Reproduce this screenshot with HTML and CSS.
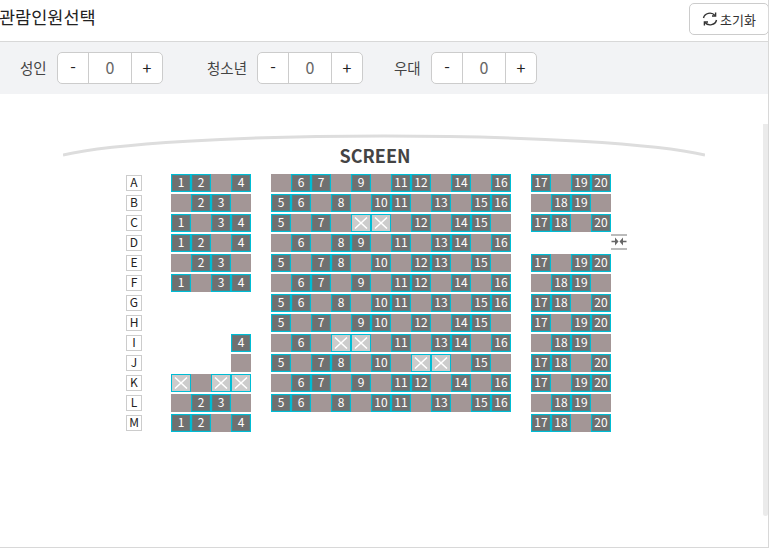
FILE: index.html
```html
<!DOCTYPE html>
<html lang="ko">
<head>
    <meta charset="UTF-8">
    <title>관람인원선택</title>
    <link rel="stylesheet" href="styles.css">
</head>
<body>
    <div class="panel">
        <div class="panel-head">
            <h2 class="panel-title">관람인원선택</h2>
            <button class="reset-btn">
                <svg class="reset-icon" viewBox="0 0 16 16" fill="none" stroke="#333" stroke-width="1.4">
                    <path d="M1.5 7 A6.5 6 0 0 1 13 4.5"/>
                    <path d="M13.6 1.4 V5 H10"/>
                    <path d="M14.5 9 A6.5 6 0 0 1 3 11.5"/>
                    <path d="M2.4 14.6 V11 H6"/>
                </svg>
                초기화
            </button>
        </div>

        <div class="count-bar">
            <span class="count-label">성인</span>
            <div class="stepper"><span class="step-btn">-</span><span class="step-num">0</span><span class="step-btn">+</span></div>
            <span class="count-label count-label-teen">청소년</span>
            <div class="stepper"><span class="step-btn">-</span><span class="step-num">0</span><span class="step-btn">+</span></div>
            <span class="count-label count-label-pref">우대</span>
            <div class="stepper"><span class="step-btn">-</span><span class="step-num">0</span><span class="step-btn">+</span></div>
        </div>

        <div class="seat-area">
            <div class="scroll-thumb"></div>
            <div class="screen">
                <svg class="screen-arc" viewBox="0 0 642 36" fill="none">
                    <path d="M0 31 A340 28.4 0 0 1 642 31" stroke="#dddddd" stroke-width="3"/>
                </svg>
                <div class="screen-text">SCREEN</div>
            </div>
            <div id="seatMap" class="seat-map"></div>
        </div>
    </div>

    <script src="seats.js"></script>
</body>
</html>
```

FILE: styles.css
```css
* {
    box-sizing: border-box;
}
body {
    margin: 0;
    font-family: "Noto Sans CJK KR", "Noto Sans", sans-serif;
    color: #333;
    background: #fff;
    overflow: hidden;
}
.panel {
    width: 769px;
    height: 548px;
    border-right: 1px solid #d8d8d8;
    border-bottom: 1px solid #d8d8d8;
    overflow: hidden;
}
.panel-head {
    height: 41px;
    padding-bottom: 7px;
    display: flex;
    align-items: center;
    justify-content: space-between;
}
.panel-title {
    margin: -2px 0 0 -1px;
    font-size: 17.5px;
    font-weight: 400;
    color: #222;
}
.reset-btn {
    width: 80px;
    height: 32px;
    margin-top: 4px;
    margin-right: -1px;
    padding: 0;
    display: flex;
    align-items: center;
    justify-content: center;
    gap: 2px;
    font-family: inherit;
    font-size: 13px;
    color: #333;
    background: #fff;
    border: 1px solid #ccc;
    border-radius: 5px;
}
.reset-icon {
    width: 16px;
    height: 16px;
}
.count-bar {
    height: 53px;
    padding-left: 20px;
    border-top: 1px solid #d8d8d8;
    background: #f2f3f5;
    display: flex;
    align-items: center;
}
.count-label {
    width: 27px;
    flex: none;
    margin-right: 10px;
    padding-bottom: 2px;
    font-size: 14.5px;
    white-space: nowrap;
    color: #444;
}
.count-label-teen {
    width: 40px;
    margin-left: 44px;
}
.count-label-pref {
    margin-left: 31px;
}
.stepper {
    width: 106px;
    height: 32px;
    flex: none;
    display: flex;
    background: #fff;
    border: 1px solid #ccc;
    border-radius: 5px;
    font-size: 16px;
    line-height: 28px;
    text-align: center;
}
.step-btn {
    width: 30px;
    color: #222;
}
.step-num {
    flex: 1;
    color: #666;
    border-left: 1px solid #ccc;
    border-right: 1px solid #ccc;
}
.seat-area {
    position: relative;
    height: 453px;
    padding-top: 30px;
}
.scroll-thumb {
    position: absolute;
    top: 30px;
    right: 0;
    width: 5px;
    height: 392px;
    background: #ebebeb;
    border-radius: 0 0 3px 3px;
}
.screen {
    width: 642px;
    height: 50px;
    margin-left: 63px;
}
.screen-arc {
    display: block;
    width: 642px;
    height: 36px;
}
.screen-text {
    margin-top: -17px;
    padding-right: 18px;
    text-align: center;
    font-size: 18px;
    line-height: 24px;
    font-weight: 700;
    color: #444;
}
.seat-map {
    margin-left: 126px;
}
.seat-row {
    position: relative;
    height: 18px;
    margin-bottom: 2px;
    display: flex;
}
.row-label {
    width: 16px;
    height: 16px;
    margin-top: 1px;
    margin-right: 29px;
    border: 1px solid #ccc;
    font-size: 12px;
    line-height: 12px;
    text-align: center;
    color: #222;
}
.seat {
    width: 20px;
    height: 18px;
    flex: none;
    font-size: 12px;
    line-height: 14px;
    text-align: center;
    color: #fff;
}
.seat-none {
    background: transparent;
}
.seat-off {
    background: #a39696;
}
.seat-on {
    background: #707070;
    border: 1px solid #00bcd4;
    box-shadow: inset 0 0 0 1px rgba(0, 188, 212, 0.2);
}
.seat-sold {
    background: #ccc;
    border: 1px solid #00bcd4;
    display: flex;
    align-items: center;
    justify-content: center;
}
.seat-sold svg {
    width: 14px;
    height: 12px;
}
.aisle-gap {
    width: 20px;
    flex: none;
}
.aisle-icon {
    position: absolute;
    left: 485px;
    top: 0;
    width: 16px;
    height: 16px;
}
```

FILE: seats.js
```js
// . = empty tile, x = sold, # = open seat, space = nothing there
const rows = [
    ['A', '##.#', '.##.#.##.#.#', '#.##'],
    ['B', '.##.', '##.#.##.#.##', '.##.'],
    ['C', '#.##', '#.#.xx.#.##.', '##.#'],
    ['D', '##.#', '.#.##.#.##.#', '    '],
    ['E', '.##.', '#.##.#.##.#.', '#.##'],
    ['F', '#.##', '.##.#.##.#.#', '.##.'],
    ['G', '    ', '##.#.##.#.##', '##.#'],
    ['H', '    ', '#.#.##.#.##.', '#.##'],
    ['I', '   #', '.#.xx.#.##.#', '.##.'],
    ['J', '   .', '#.##.#.xx.#.', '##.#'],
    ['K', 'x.xx', '.##.#.##.#.#', '#.##'],
    ['L', '.##.', '##.#.##.#.##', '.##.'],
    ['M', '##.#', '            ', '##.#']
];
const starts = [1, 5, 17];
const crossSvg = '<svg viewBox="0 0 14 12" stroke="#fff" stroke-width="1.5"><path d="M1 0.5 L13 11.5 M13 0.5 L1 11.5"/></svg>';

const seatMap = document.getElementById('seatMap');

rows.forEach(row => {
    let html = `<div class="row-label">${row[0]}</div>`;
    for (let b = 0; b < 3; b++) {
        if (b > 0) html += '<div class="aisle-gap"></div>';
        [...row[b + 1]].forEach((c, i) => {
            if (c === '#') html += `<div class="seat seat-on">${starts[b] + i}</div>`;
            else if (c === 'x') html += `<div class="seat seat-sold">${crossSvg}</div>`;
            else if (c === '.') html += '<div class="seat seat-off"></div>';
            else html += '<div class="seat seat-none"></div>';
        });
    }
    if (row[0] === 'D') {
        html += '<svg class="aisle-icon" viewBox="0 0 16 16" fill="#666"><path d="M0 0H16V2H0ZM0 14H16V16H0Z" fill="#bbb"/><path d="M0.5 6.8H4V3.5L7.5 7.5L4 11.5V8.2H0.5ZM15.5 6.8H12V3.5L8.5 7.5L12 11.5V8.2H15.5Z"/></svg>';
    }
    seatMap.innerHTML += `<div class="seat-row">${html}</div>`;
});
```
